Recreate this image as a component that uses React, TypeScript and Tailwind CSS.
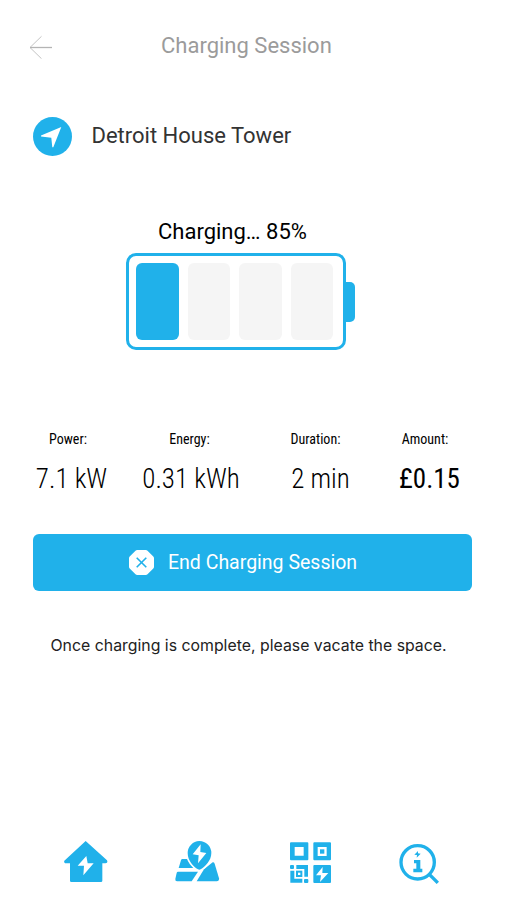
const stats = [
  { label: "Power:", value: "7.1 kW", width: "w-[77px]", labelShift: "pr-[7px]", bold: false },
  { label: "Energy:", value: "0.31 kWh", width: "w-[162px]", labelShift: "pr-[3px]", bold: false },
  { label: "Duration:", value: "2 min", width: "w-[97px]", labelShift: "pr-[10px]", bold: false },
  { label: "Amount:", value: "£0.15", width: "w-[121px]", labelShift: "pr-[9px]", bold: true },
];

function BackArrow() {
  return (
    <svg className="h-6 w-6" viewBox="0 0 24 24" fill="none" stroke="#b4b4b4">
      <path d="M1 12.5H23" strokeWidth="1.3" />
      <path d="M12.5 1.3L1 12.5l11.5 11.2" strokeWidth="0.8" />
    </svg>
  );
}

function HouseIcon() {
  return (
    <svg className="h-[60px] w-[70px]" viewBox="0 0 210 180">
      <path
        fill="#20b1ea"
        d="M92 33l64 58q4 8-5 9h-9v52q0 4-4 4H49q-4 0-4-4v-52H34q-9-1-6-8z"
      />
      <path fill="#fff" d="M94 78l-26 29h19l-2 29 31-36H98z" />
    </svg>
  );
}

function StationMapIcon() {
  return (
    <svg className="h-[60px] w-[70px]" viewBox="0 0 210 180">
      <g fill="#20b1ea">
        <path d="M52 87h20l18 27H41l7-23q1-4 4-4z" />
        <path d="M39 125h60l-19 29H36q-6 0-5-7l4-18q1-4 4-4z" />
        <path d="M95 154l22-36 26-21q4-1 6 4l13 44q1 9-7 9z" />
        <path
          stroke="#fff"
          strokeWidth="10"
          paintOrder="stroke"
          d="M103 33a36 36 0 0 1 36 36c0 23-19 41-32 49q-4 2-8 0C85 110 68 92 68 69a36 36 0 0 1 35-36z"
        />
      </g>
      <path fill="#fff" d="M107 43L83 73l18 3-2 24 25-31-18-3z" />
    </svg>
  );
}

function CodeIcon() {
  return (
    <svg className="h-[60px] w-[70px]" viewBox="0 0 210 180">
      <path
        fill="#20b1ea"
        fillRule="evenodd"
        d="M48 37h49q3 0 3 3v48q0 3-3 3H48q-3 0-3-3V40q0-3 3-3zM59 51v26h27V51z"
      />
      <path
        fill="#20b1ea"
        fillRule="evenodd"
        d="M118 37h47q3 0 3 3v48q0 3-3 3h-47q-3 0-3-3V40q0-3 3-3zM128 51v27h27V51z"
      />
      <rect x="135" y="58" width="13" height="13" fill="#20b1ea" />
      <g fill="#20b1ea">
        <rect x="45" y="105" width="12" height="12" rx="3" />
        <path d="M64 105h35v35H88v-23H64z" />
        <path d="M46 122h12v24h24v12H46z" />
        <rect x="87" y="147" width="13" height="12" rx="3" />
      </g>
      <rect x="66" y="125" width="13" height="13" fill="none" stroke="#20b1ea" strokeWidth="6" />
      <rect x="115" y="105" width="53" height="54" rx="3" fill="#20b1ea" />
      <path fill="#fff" d="M143 111l-20 25h15l-3 20 25-27h-18z" />
    </svg>
  );
}

function InfoIcon() {
  return (
    <svg className="h-[60px] w-[70px]" viewBox="0 0 210 180">
      <circle cx="98" cy="97" r="50" fill="none" stroke="#20b1ea" strokeWidth="10" />
      <path d="M134 134l21 21" stroke="#20b1ea" strokeWidth="10" strokeLinecap="square" />
      <g fill="#20b1ea">
        <path d="M99 63L88 74l8 1-1 8 12-12-8-1z" />
        <path d="M87 90h19v26h6v11H85v-11h9v-16h-7z" />
      </g>
    </svg>
  );
}

function Battery() {
  return (
    <div className="mt-[7.5px] ml-[126px] flex items-center">
      <div className="flex h-[97px] w-[220px] gap-[9px] rounded-[10px] border-3 border-[#20b1ea] py-[7px] pr-[10px] pl-[7px]">
        <div className="flex-1 rounded-[6px] bg-[#20b1ea]" />
        <div className="flex-1 rounded-[6px] bg-[#f5f5f5]" />
        <div className="flex-1 rounded-[6px] bg-[#f5f5f5]" />
        <div className="flex-1 rounded-[6px] bg-[#f5f5f5]" />
      </div>
      <div className="mt-px h-10 w-[9px] rounded-r-[5px] bg-[#20b1ea]" />
    </div>
  );
}

export default function App() {
  return (
    <div className="flex h-[900px] w-[507px] flex-col overflow-hidden bg-white font-['Roboto',sans-serif] whitespace-nowrap">
      <header className="flex h-[90px] items-center pl-[29px]">
        <div className="pt-1">
          <BackArrow />
        </div>
        <h1 className="ml-[108px] text-[22px] text-[#9b9b9b]">Charging Session</h1>
      </header>

      <div className="flex h-[92px] items-center pl-[33px]">
        <svg className="h-[39px] w-[39px]" viewBox="0 0 39 39">
          <circle cx="19.5" cy="19.5" r="19.5" fill="#20b1ea" />
          <path fill="#fff" d="M28.3 10L8 18.5v1l10.3 1.2 1 9.6h1z" />
        </svg>
        <p className="ml-[19.5px] pb-0.5 text-[22px] text-[#333]">Detroit House Tower</p>
      </div>

      <p className="mt-[33px] ml-[158px] h-[30px] text-[22px] leading-[33px] text-black">
        Charging… 85%
      </p>
      <Battery />

      <div className="mt-[78px] ml-[33px] flex h-[78px] text-center font-['Roboto_Condensed','Roboto',sans-serif] text-black [font-stretch:75%]">
        {stats.map((stat) => (
          <div key={stat.label} className={stat.width}>
            <p className={`text-[14px] leading-[23px] ${stat.labelShift}`}>{stat.label}</p>
            <p
              className={`mt-[9px] text-[27px] leading-[39px] ${stat.bold ? "font-normal" : "font-light"}`}
            >
              {stat.value}
            </p>
          </div>
        ))}
      </div>

      <button className="mt-[28px] ml-[33px] flex h-[57.5px] w-[439px] items-center rounded-[6px] bg-[#20b1ea] pl-[96px] text-[19.5px] text-white">
        <svg className="h-[25px] w-[25px]" viewBox="0 0 25 25">
          <path
            fill="#fff"
            d="M8.2 0h8.6q1 0 1.7.7l5.8 5.8q.7.7.7 1.7v8.6q0 1-.7 1.7l-5.8 5.8q-.7.7-1.7.7H8.2q-1 0-1.7-.7L.7 18.5q-.7-.7-.7-1.7V8.2q0-1 .7-1.7L6.5.7Q7.2 0 8.2 0z"
          />
          <path d="M7.7 7.7l9.6 9.6M17.3 7.7l-9.6 9.6" stroke="#20b1ea" strokeWidth="1.6" />
        </svg>
        <span className="ml-[14px]">End Charging Session</span>
      </button>

      <p className="mt-[43px] ml-[50.5px] font-['Inter',sans-serif] text-[15.85px] leading-6 text-[#222]">
        Once charging is complete, please vacate the space.
      </p>

      <nav className="mt-auto flex gap-10 pb-2.5 pl-[55px]">
        <HouseIcon />
        <StationMapIcon />
        <CodeIcon />
        <InfoIcon />
      </nav>
    </div>
  );
}
